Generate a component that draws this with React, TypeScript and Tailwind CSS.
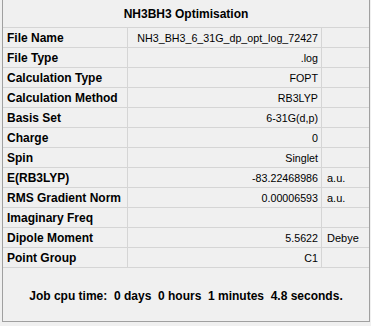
const rows: [string, string, string][] = [
  ["File Name", "NH3_BH3_6_31G_dp_opt_log_72427", ""],
  ["File Type", ".log", ""],
  ["Calculation Type", "FOPT", ""],
  ["Calculation Method", "RB3LYP", ""],
  ["Basis Set", "6-31G(d,p)", ""],
  ["Charge", "0", ""],
  ["Spin", "Singlet", ""],
  ["E(RB3LYP)", "-83.22468986", "a.u."],
  ["RMS Gradient Norm", "0.00006593", "a.u."],
  ["Imaginary Freq", "", ""],
  ["Dipole Moment", "5.5622", "Debye"],
  ["Point Group", "C1", ""],
];

export default function App() {
  return (
    <div
      className="h-[326px] w-[371px] bg-[#f0f0f0] text-black"
      style={{ fontFamily: '"Liberation Sans", Arial, sans-serif' }}
    >
      <div className="ml-[2px] w-[368px] border-x border-b border-[#a0a0a0]">
        {/* Title */}
        <div className="flex h-[28px] items-center justify-center border-b border-[#d5d5d5] pt-[1px] text-[12px] font-bold">
          NH3BH3 Optimisation
        </div>

        {/* Rows */}
        {rows.map(([label, value, unit]) => (
          <div
            key={label}
            className="grid h-[20px] grid-cols-[125px_194px_1fr] border-b border-[#d5d5d5] leading-[20px]"
          >
            <div className="border-r border-[#d5d5d5] pl-[4px] text-[12px] font-bold">
              {label}
            </div>
            <div className="border-r border-[#d5d5d5] pr-[3px] text-right text-[10.7px]">
              {value}
            </div>
            <div className="pl-[5px] text-[11px]">{unit}</div>
          </div>
        ))}

        {/* Footer */}
        <div className="flex h-[53px] items-center justify-center whitespace-pre pt-[3px] text-[12px] font-bold">
          {"Job cpu time:  0 days  0 hours  1 minutes  4.8 seconds."}
        </div>
      </div>
    </div>
  );
}
